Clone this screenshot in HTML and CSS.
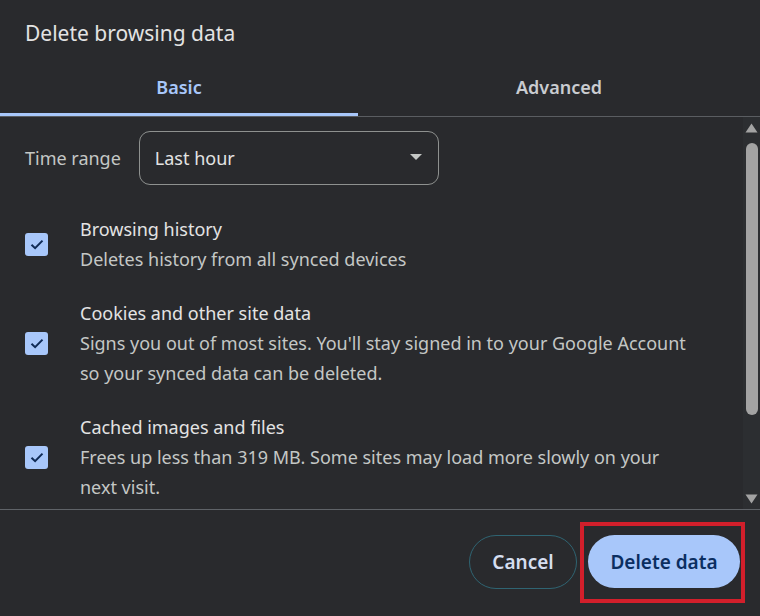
FILE: index.html
```html
<!DOCTYPE html>
<html>
<head>
<meta charset="utf-8">
<link rel="stylesheet" href="styles.css">
</head>
<body>
<div class="dialog">
  <div class="title">Delete browsing data</div>
  <div class="tabs">
    <div class="tab active">Basic</div>
    <div class="tab">Advanced</div>
  </div>
  <div class="body">
    <div class="content">
      <div class="range">
        <span class="range-label">Time range</span>
        <div class="select">
          <span>Last hour</span>
          <svg class="caret" width="12" height="6" viewBox="0 0 12 6"><path d="M0 0h12L6 6z" fill="#c4c7c5"/></svg>
        </div>
      </div>
      <div class="option">
        <div class="check"><svg width="14" height="11" viewBox="0 0 14 11"><path d="M1.5 5.8l3.6 3.4L12.5 1.6" fill="none" stroke="#0f2a55" stroke-width="2"/></svg></div>
        <div class="text">
          <div class="opt-title">Browsing history</div>
          <div class="opt-desc">Deletes history from all synced devices</div>
        </div>
      </div>
      <div class="option">
        <div class="check"><svg width="14" height="11" viewBox="0 0 14 11"><path d="M1.5 5.8l3.6 3.4L12.5 1.6" fill="none" stroke="#0f2a55" stroke-width="2"/></svg></div>
        <div class="text">
          <div class="opt-title">Cookies and other site data</div>
          <div class="opt-desc">Signs you out of most sites. You'll stay signed in to your Google Account so your synced data can be deleted.</div>
        </div>
      </div>
      <div class="option">
        <div class="check"><svg width="14" height="11" viewBox="0 0 14 11"><path d="M1.5 5.8l3.6 3.4L12.5 1.6" fill="none" stroke="#0f2a55" stroke-width="2"/></svg></div>
        <div class="text">
          <div class="opt-title">Cached images and files</div>
          <div class="opt-desc">Frees up less than 319 MB. Some sites may load more slowly on your next visit.</div>
        </div>
      </div>
    </div>
    <div class="scrollbar">
      <svg class="arrow" width="13" height="10" viewBox="0 0 13 10"><path d="M6.5 0.5L12.5 9.5H0.5z" fill="#a3a3a3"/></svg>
      <div class="thumb"></div>
      <svg class="arrow" width="13" height="10" viewBox="0 0 13 10"><path d="M0.5 0.5H12.5L6.5 9.5z" fill="#a3a3a3"/></svg>
    </div>
  </div>
  <div class="footer">
    <button class="btn cancel">Cancel</button>
    <div class="highlight">
      <button class="btn primary">Delete data</button>
    </div>
  </div>
</div>
</body>
</html>
```

FILE: styles.css
```css
* { box-sizing: border-box; }
html, body {
  margin: 0;
  padding: 0;
  background: #292a2d;
}
body {
  width: 760px;
  height: 616px;
  overflow: hidden;
  font-family: "Noto Sans", "Open Sans", sans-serif;
  color: #e3e3e3;
}
.dialog {
  display: flex;
  flex-direction: column;
  height: 616px;
}
.title {
  padding: 19px 0 0 25px;
  font-size: 21px;
  line-height: 28px;
  height: 60px;
  color: #e3e3e3;
}
.tabs {
  display: grid;
  grid-template-columns: 358px 1fr;
  border-bottom: 1px solid #5a5d61;
  height: 57px;
}
.tab {
  display: flex;
  align-items: center;
  justify-content: center;
  font-size: 18px;
  font-weight: 600;
  color: #c9ccd0;
  padding-bottom: 2px;
}
.tab.active {
  color: #a8c7fa;
  border-bottom: 3px solid #a8c7fa;
  padding-bottom: 0;
}
.body {
  display: flex;
  height: 393px;
  border-bottom: 1px solid #5f6368;
}
.content {
  flex: 1;
  padding: 14px 0 0 25px;
}
.range {
  display: flex;
  align-items: center;
  gap: 18px;
  margin-bottom: 29px;
}
.range-label {
  font-size: 18px;
  color: #c4c7c5;
}
.select {
  width: 300px;
  height: 54px;
  border: 1px solid #8e918f;
  border-radius: 11px;
  display: flex;
  align-items: center;
  justify-content: space-between;
  padding: 0 16px 0 15px;
  font-size: 18px;
  color: #e3e3e3;
}
.caret { margin-top: -2px; }
.option {
  display: flex;
  align-items: center;
  margin-bottom: 24px;
}
.check {
  width: 23px;
  height: 23px;
  border-radius: 3px;
  background: #a8c7fa;
  display: flex;
  align-items: center;
  justify-content: center;
  margin-right: 32px;
  flex: none;
}
.text {
  width: 615px;
  font-size: 18px;
  line-height: 30px;
}
.opt-title { color: #e3e3e3; }
.opt-desc { color: #c4c7c5; }
.scrollbar {
  width: 17px;
  background: #2c2e31;
  display: flex;
  flex-direction: column;
  align-items: center;
  padding: 6px 0 5px;
}
.thumb {
  width: 12px;
  flex: none;
  height: 272px;
  margin: 10px 0 auto;
  background: #a3a3a3;
  border-radius: 6px;
}
.footer {
  flex: 1;
  display: flex;
  justify-content: flex-end;
  align-items: flex-start;
  padding: 12px 15px 0 0;
  gap: 3px;
}
.btn {
  font-family: inherit;
  font-size: 19px;
  font-weight: 600;
  border-radius: 28px;
  cursor: pointer;
}
.cancel {
  margin-top: 13px;
  width: 108px;
  height: 54px;
  background: transparent;
  border: 1px solid #2f6472;
  color: #d5def0;
}
.highlight {
  border: 4px solid #d21f2b;
  padding: 9px 1px 11px 4px;
}
.primary {
  width: 152px;
  height: 53px;
  background: #a8c7fa;
  border: none;
  color: #0b2e61;
}
```
